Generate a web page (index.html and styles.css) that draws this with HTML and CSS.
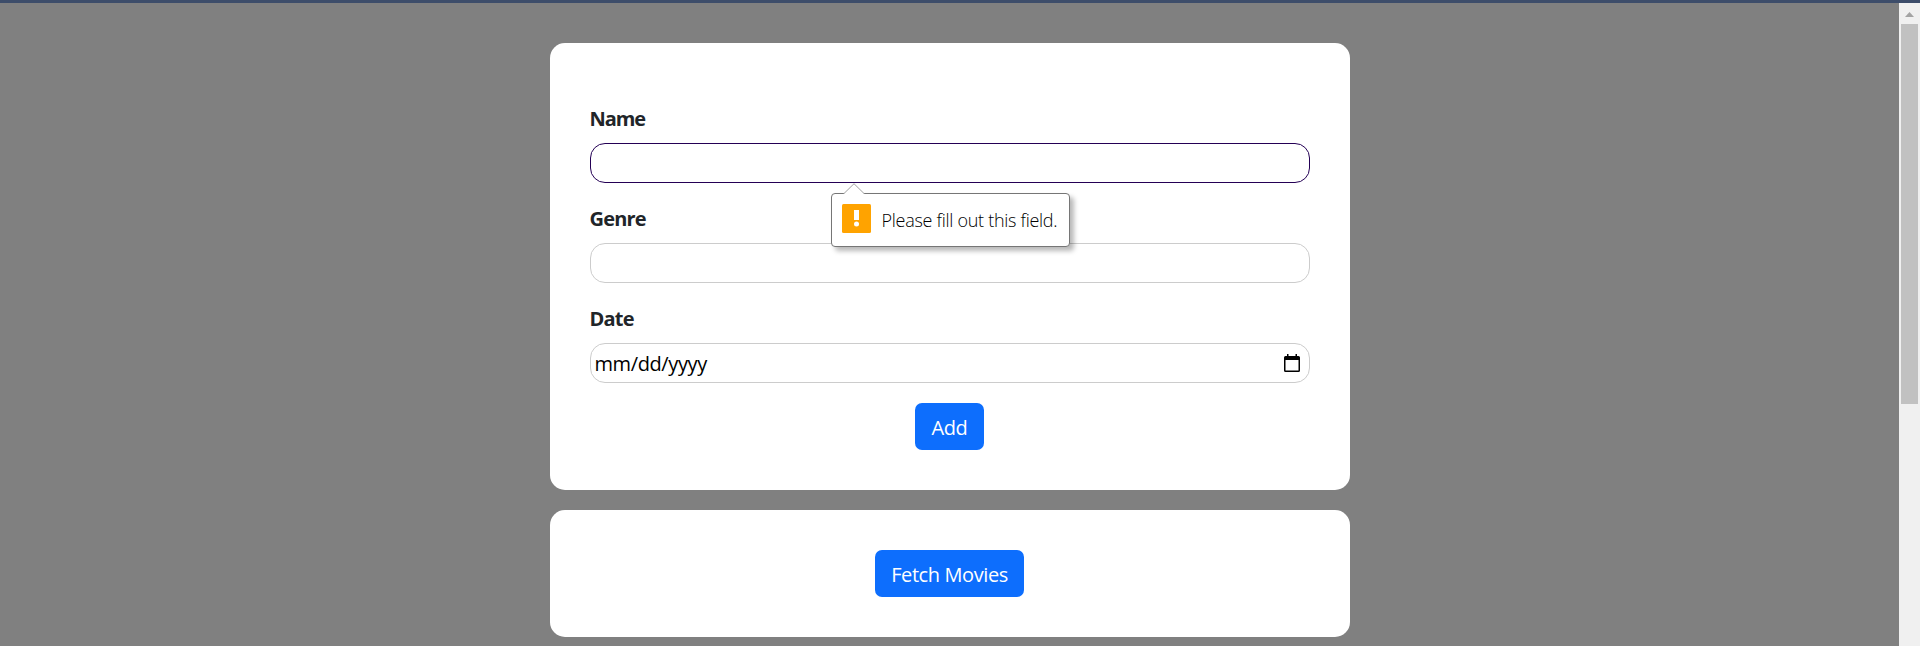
FILE: index.html
```html
<!DOCTYPE html>
<html lang="en">
<head>
<meta charset="utf-8">
<title>Movies</title>
<link rel="stylesheet" href="styles.css">
</head>
<body>
<div class="window">
  <main class="page">
    <section class="card form-card">
      <div class="field">
        <span class="label name-label">Name</span>
        <div class="input invalid">
          <div class="tooltip">
            <svg class="arrow" width="22" height="12" viewBox="0 0 22 12"><path d="M0 11.5 1 10.5 11 .7 21 10.5 22 11.5V12H0Z" fill="#fff"/><path d="M1 10.5 11 .7 21 10.5" fill="none" stroke="#a0a0a0"/></svg>
            <svg class="warn" width="29" height="29" viewBox="0 0 29 29"><rect width="29" height="29" rx="1.5" fill="#ffa300"/><path d="M12 6h5v10h-5z" fill="#fff"/><circle cx="14.5" cy="20" r="2.5" fill="#fff"/></svg>
            <span class="message">Please fill out this field.</span>
          </div>
        </div>
      </div>
      <div class="field">
        <span class="label">Genre</span>
        <div class="input"></div>
      </div>
      <div class="field">
        <span class="label">Date</span>
        <div class="input date">
          <span class="placeholder">mm/dd/yyyy</span>
          <svg width="16" height="18" viewBox="0 0 16 18"><path d="M3 0h1.500v2h7V0H13v2h1.500Q16 2 16 3.500v13Q16 18 14.500 18h-13Q0 18 0 16.500v-13Q0 2 1.500 2H3ZM1.500 6v10.500h13V6Z" fill="#000" fill-rule="evenodd"/></svg>
        </div>
      </div>
      <button class="button add">Add</button>
    </section>
    <section class="card fetch-card">
      <button class="button fetch">Fetch Movies</button>
    </section>
  </main>
  <div class="scrollbar">
    <svg width="9" height="5" viewBox="0 0 9 5"><path d="M0 5 4.500 0 9 5Z" fill="#a3a3a3"/></svg>
    <div class="thumb"></div>
  </div>
</div>
</body>
</html>
```
FILE: styles.css
```css
* { box-sizing: border-box; }
body {
  margin: 0;
  height: 646px;
  overflow: hidden;
  font: 20px/30px "Open Sans", "Noto Sans", sans-serif;
  color: #212529;
  background: #808080;
}
.window { display: flex; height: 646px; border-top: 3px solid #3d4d6a; }
.page {
  flex: 1;
  display: flex;
  flex-direction: column;
  align-items: center;
  gap: 20px;
  padding-top: 40px;
}
.card {
  width: 800px;
  display: flex;
  flex-direction: column;
  align-items: center;
  background: #fff;
  border-radius: 15px;
}
.form-card { height: 447px; padding: 60px 40px 40px; gap: 20px; }
.fetch-card { height: 127px; padding-top: 40px; }
.field { width: 100%; display: flex; flex-direction: column; gap: 10px; }
.label { height: 30px; padding-top: 1px; font-weight: 700; letter-spacing: -.8px; white-space: nowrap; }
.name-label { letter-spacing: -1.1px; }
.input {
  position: relative;
  height: 40px;
  border: 1px solid #ccc;
  border-radius: 15px;
}
.invalid { border-color: #240055; }
.date { display: flex; align-items: center; justify-content: space-between; padding: 0 9px 0 4px; color: #000; }
.placeholder { padding-top: 2px; letter-spacing: -.4px; }
.button {
  flex: none;
  height: 47px;
  padding: 2px 0 0;
  border: 0;
  border-radius: 7px;
  background: #0d6efd;
  color: #fff;
  font: inherit;
  letter-spacing: -.4px;
  white-space: nowrap;
}
.add { width: 69px; }
.fetch { width: 149px; }
.tooltip {
  position: absolute;
  z-index: 2;
  top: 49px;
  left: 240px;
  width: 239px;
  height: 54px;
  display: flex;
  gap: 11px;
  padding: 10px;
  border: 1px solid #767676;
  border-radius: 4px;
  background: #fff;
  box-shadow: 4px 4px 5px rgba(0, 0, 0, .28);
  color: #000;
  font-size: 18px;
  font-weight: 300;
  letter-spacing: -.28px;
  white-space: nowrap;
}
.message { padding-top: 1px; }
.arrow { position: absolute; top: -11px; left: 11px; }
.warn { flex: none; }
.scrollbar {
  width: 21px;
  display: flex;
  flex-direction: column;
  align-items: center;
  gap: 7px;
  padding-top: 9px;
  background: #f0f0f0;
}
.thumb { width: 17px; height: 380px; background: #c1c1c1; }
```
